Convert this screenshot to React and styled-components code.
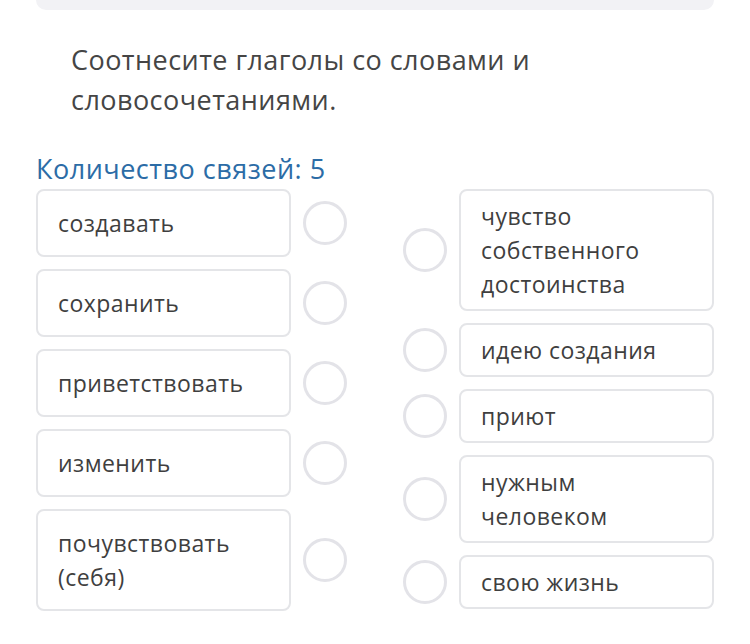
import React from "react";
import styled, { createGlobalStyle } from "styled-components";

const GlobalStyle = createGlobalStyle`
  html, body {
    margin: 0;
    padding: 0;
    background: #ffffff;
  }
  body {
    font-family: "Open Sans", "Noto Sans", sans-serif;
    -webkit-font-smoothing: antialiased;
  }
`;

const left = [
  "создавать",
  "сохранить",
  "приветствовать",
  "изменить",
  "почувствовать (себя)",
];

const right = [
  "чувство собственного достоинства",
  "идею создания",
  "приют",
  "нужным человеком",
  "свою жизнь",
];

export default function App() {
  return (
    <Page>
      <GlobalStyle />
      <TopPanel />
      <Question>Соотнесите глаголы со словами и словосочетаниями.</Question>
      <Counter>Количество связей: 5</Counter>
      <Board>
        <Column>
          {left.map((text) => (
            <Row key={text}>
              <Card side="left">{text}</Card>
              <Dot />
            </Row>
          ))}
        </Column>
        <Column>
          {right.map((text) => (
            <Row key={text}>
              <Dot />
              <Card side="right">{text}</Card>
            </Row>
          ))}
        </Column>
      </Board>
    </Page>
  );
}

const Page = styled.div`
  width: 750px;
  padding: 0 36px;
  box-sizing: border-box;
`;

const TopPanel = styled.div`
  height: 10px;
  background: #f2f2f5;
  border-radius: 0 0 10px 10px;
`;

const Question = styled.p`
  margin: 0;
  padding: 30px 20px 0 35px;
  font-size: 27px;
  letter-spacing: 0.45px;
  line-height: 40px;
  color: #454545;
  max-width: 520px;
`;

const Counter = styled.div`
  margin-top: 31px;
  font-size: 27px;
  letter-spacing: 0.5px;
  line-height: 36px;
  color: #2c6ca6;
`;

const Board = styled.div`
  display: flex;
  justify-content: space-between;
  margin-top: 2px;
`;

const Column = styled.div`
  display: flex;
  flex-direction: column;
  gap: 12px;
`;

const Row = styled.div`
  display: flex;
  align-items: center;
  gap: 12px;
`;

const Card = styled.div`
  width: 255px;
  box-sizing: border-box;
  border: 2px solid #e4e5e8;
  border-radius: 8px;
  padding: ${(p) => (p.side === "left" ? "15px 20px" : "8px 20px")};
  font-size: 23px;
  letter-spacing: 0.45px;
  line-height: 34px;
  color: #3f3f3f;
`;

const Dot = styled.div`
  width: 44px;
  height: 44px;
  box-sizing: border-box;
  border: 3px solid #e3e3e8;
  border-radius: 50%;
  flex-shrink: 0;
`;
